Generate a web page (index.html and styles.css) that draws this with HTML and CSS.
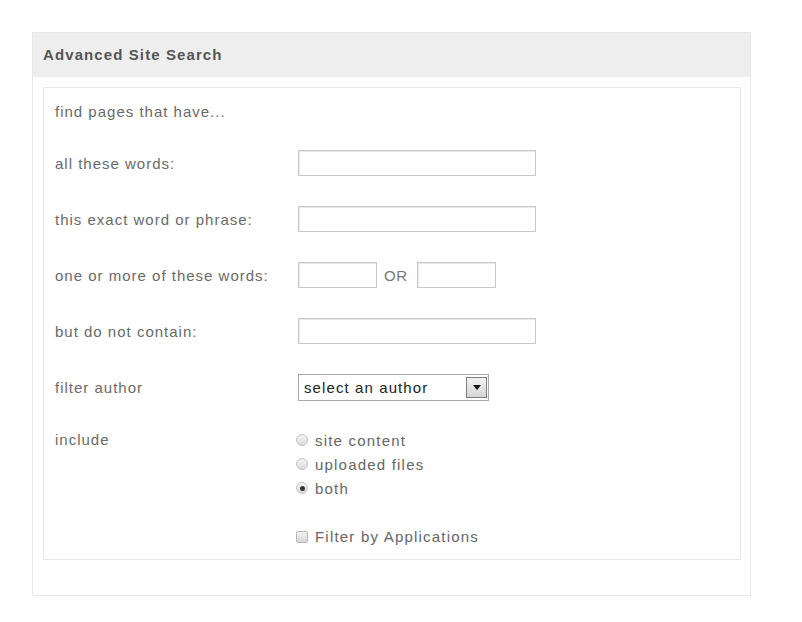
FILE: index.html
```html
<!DOCTYPE html>
<html>
<head>
<meta charset="utf-8">
<link rel="stylesheet" href="styles.css">
</head>
<body>
<div class="panel">
  <div class="panel-head">Advanced Site Search</div>
  <div class="box">
    <div class="intro">find pages that have...</div>
    <div class="row">
      <div class="label">all these words:</div>
      <input class="field wide" type="text">
    </div>
    <div class="row">
      <div class="label">this exact word or phrase:</div>
      <input class="field wide" type="text">
    </div>
    <div class="row">
      <div class="label">one or more of these words:</div>
      <input class="field short" type="text">
      <span class="or">OR</span>
      <input class="field short" type="text">
    </div>
    <div class="row">
      <div class="label">but do not contain:</div>
      <input class="field wide" type="text">
    </div>
    <div class="row sel-row">
      <div class="label">filter author</div>
      <div class="select">
        <span class="select-text">select an author</span>
        <span class="select-btn"><span class="tri"></span></span>
      </div>
    </div>
    <div class="row include-row">
      <div class="label">include</div>
      <div class="options">
        <div class="opt"><span class="radio"></span>site content</div>
        <div class="opt"><span class="radio"></span>uploaded files</div>
        <div class="opt"><span class="radio checked"></span>both</div>
        <div class="opt check-opt"><span class="checkbox"></span>Filter by Applications</div>
      </div>
    </div>
  </div>
</div>
</body>
</html>
```
FILE: styles.css
```css
* { box-sizing: border-box; }
body {
  margin: 0;
  background: #fff;
  font-family: "Liberation Sans", Arial, sans-serif;
}
.panel {
  margin: 32px 0 0 32px;
  width: 719px;
  height: 564px;
  border: 1px solid #e8e8e8;
}
.panel-head {
  height: 44px;
  background: #eeeeef;
  color: #555;
  font-weight: bold;
  font-size: 15px;
  letter-spacing: 1.1px;
  padding: 0 0 0 10px;
  line-height: 44px;
}
.box {
  margin: 10px 9px 0 10px;
  border: 1px solid #e8e8e8;
  height: 473px;
  padding: 12px 0 0 11px;
  color: #6a6a6a;
  font-size: 15px;
  letter-spacing: 1px;
}
.intro {
  height: 24px;
  line-height: 24px;
  margin-bottom: 26px;
}
.row {
  display: flex;
  align-items: center;
  height: 26px;
  margin-bottom: 30px;
}
.label {
  width: 243px;
  flex: none;
}
.field {
  height: 26px;
  border: 1px solid #c8c8c8;
  box-shadow: inset 1px 1px 0 #eaeaea;
  background: #fff;
  padding: 0 4px;
  font-size: 14px;
  margin: 0;
}
.wide { width: 238px; }
.short { width: 79px; }
.or {
  margin: 0 9px 0 7px;
  color: #777;
  font-size: 15px;
  letter-spacing: 0.5px;
}
.sel-row { height: 27px; margin-bottom: 27px; }
.select {
  width: 191px;
  height: 27px;
  border: 1px solid #a8a8a8;
  display: flex;
  align-items: center;
  justify-content: space-between;
  background: #fff;
}
.select-text {
  color: #222;
  font-size: 15px;
  letter-spacing: 1.1px;
  padding-left: 5px;
}
.select-btn {
  width: 21px;
  height: 21px;
  margin-right: 1px;
  border: 1px solid #7d7d7d;
  background: linear-gradient(#f2f2f2, #d6d6d6);
  display: flex;
  align-items: center;
  justify-content: center;
}
.tri {
  width: 0;
  height: 0;
  border-left: 4px solid transparent;
  border-right: 4px solid transparent;
  border-top: 5px solid #111;
}
.include-row {
  height: auto;
  align-items: flex-start;
  margin: 0;
}
.include-row .label {
  line-height: 24px;
}
.options {
  margin-left: -2px;
}
.opt {
  display: flex;
  align-items: center;
  height: 24px;
  color: #666;
  font-size: 15px;
  letter-spacing: 1.2px;
}
.check-opt { margin-top: 24px; }
.radio {
  width: 12px;
  height: 12px;
  border-radius: 50%;
  border: 1px solid #c2c2c2;
  background: linear-gradient(#f8f8f8, #d8d8d8);
  margin-right: 7px;
  display: flex;
  align-items: center;
  justify-content: center;
}
.radio.checked::after {
  content: "";
  width: 5px;
  height: 5px;
  border-radius: 50%;
  background: #333;
}
.checkbox {
  width: 12px;
  height: 12px;
  border-radius: 2px;
  border: 1px solid #b8b8b8;
  background: linear-gradient(#f4f4f4, #d6d6d6);
  margin-right: 7px;
  margin-top: 2px;
}
```
